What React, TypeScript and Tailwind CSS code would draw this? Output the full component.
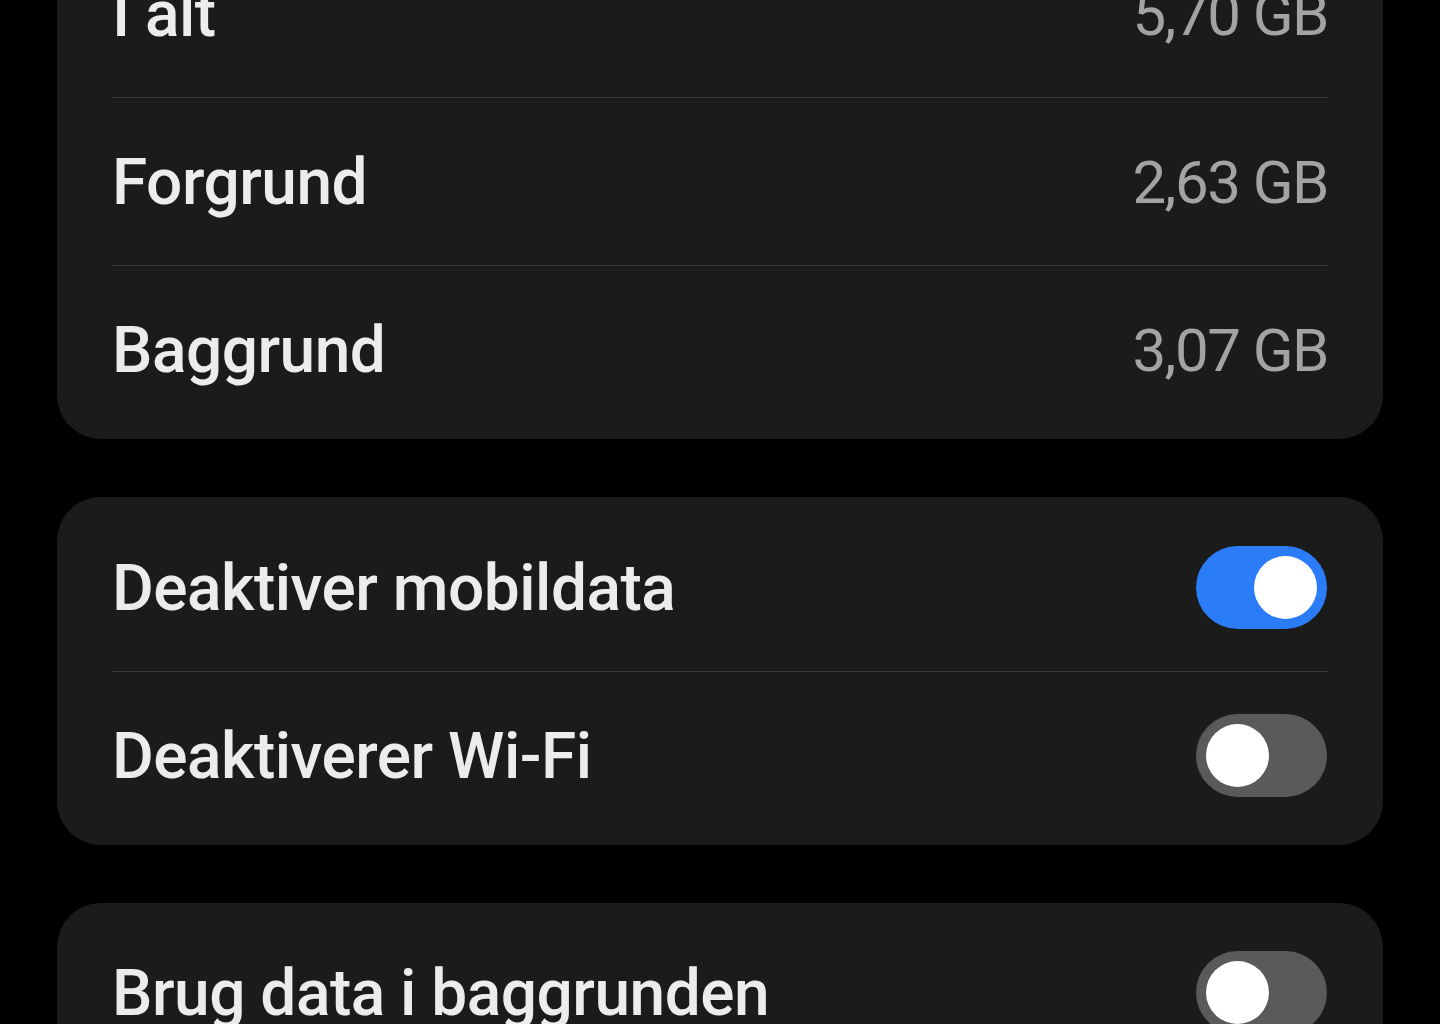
import { useState } from 'react'

type ToggleProps = {
  on: boolean
  onChange: () => void
}

function Toggle({ on, onChange }: ToggleProps) {
  return (
    <button
      onClick={onChange}
      className={`relative mr-px flex h-[83px] w-[131px] shrink-0 items-center rounded-full px-[10px] ${
        on ? 'justify-end bg-[#2a7df6]' : 'justify-start bg-[#5a5a5a]'
      }`}
    >
      <span className="block h-[63px] w-[63px] rounded-full bg-white" />
    </button>
  )
}

function Divider() {
  return <div className="h-px bg-[#373737]" />
}

function ValueRow({ label, value }: { label: string; value: string }) {
  return (
    <div className="flex h-[167px] items-center justify-between pt-[3px]">
      <span className="text-[64px] font-medium text-[#ececec]">{label}</span>
      <span className="text-[60px] font-normal tracking-[-1.5px] text-[#a3a3a3]">{value}</span>
    </div>
  )
}

function ToggleRow({ label, on, onChange }: { label: string; on: boolean; onChange: () => void }) {
  return (
    <div className="flex h-[167px] items-center justify-between">
      <span className="pt-[3px] text-[64px] font-medium text-[#ececec]">{label}</span>
      <Toggle on={on} onChange={onChange} />
    </div>
  )
}

export default function App() {
  const [mobile, setMobile] = useState(true)
  const [wifi, setWifi] = useState(false)
  const [background, setBackground] = useState(false)

  return (
    <div
      className="h-[1024px] overflow-hidden bg-black px-[57px]"
      style={{ fontFamily: 'Roboto, "Noto Sans", sans-serif' }}
    >
      <div className="-mt-[76px] flex flex-col gap-[58px] leading-none tracking-[-0.5px]">
        {/* Usage */}
        <div className="rounded-[44px] bg-[#1b1b1b] px-[55px] py-[6px]">
          <ValueRow label="I alt" value="5,70 GB" />
          <Divider />
          <ValueRow label="Forgrund" value="2,63 GB" />
          <Divider />
          <ValueRow label="Baggrund" value="3,07 GB" />
        </div>

        {/* Restrictions */}
        <div className="rounded-[44px] bg-[#1b1b1b] px-[55px] pt-[7px] pb-[6px]">
          <ToggleRow label="Deaktiver mobildata" on={mobile} onChange={() => setMobile(!mobile)} />
          <Divider />
          <ToggleRow label="Deaktiverer Wi-Fi" on={wifi} onChange={() => setWifi(!wifi)} />
        </div>

        {/* Background data */}
        <div className="rounded-[44px] bg-[#1b1b1b] px-[55px] py-[6px]">
          <ToggleRow
            label="Brug data i baggrunden"
            on={background}
            onChange={() => setBackground(!background)}
          />
        </div>
      </div>
    </div>
  )
}
